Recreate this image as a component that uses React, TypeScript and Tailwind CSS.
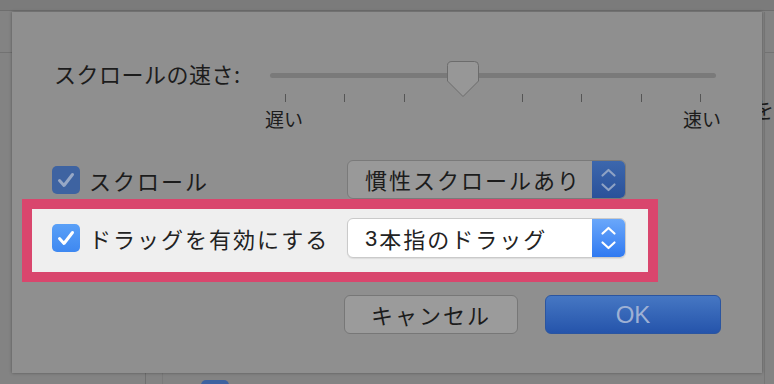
import React from "react";

const font = { fontFamily: '"Noto Sans CJK JP", "Noto Sans", sans-serif' };

function Check({ color }: { color: string }) {
  return (
    <svg width="28" height="28" viewBox="0 0 28 28">
      <path d="M7.5 14.5 L12 19.5 L20.5 8.5" fill="none" stroke={color} strokeWidth="3" strokeLinecap="round" strokeLinejoin="round" />
    </svg>
  );
}

function Chevrons({ color }: { color: string }) {
  return (
    <svg width="33" height="40" viewBox="0 0 33 40">
      <path d="M10.5 15.5 L16.5 10 L22.5 15.5" fill="none" stroke={color} strokeWidth="2.2" strokeLinecap="round" strokeLinejoin="round" />
      <path d="M10.5 24.5 L16.5 30 L22.5 24.5" fill="none" stroke={color} strokeWidth="2.2" strokeLinecap="round" strokeLinejoin="round" />
    </svg>
  );
}

export default function App() {
  const ticks = [0, 1, 2, 3, 4, 5, 6, 7];
  return (
    <div className="relative w-[774px] h-[384px] overflow-hidden bg-[#838383]" style={font}>
      {/* background window decorations */}
      <div className="absolute left-0 top-0 w-[774px] h-[11px] bg-[#7b7b7b] border-b border-[#6e6e6e]" />
      <div className="absolute left-0 top-[52px] w-[12px] h-px bg-[#727272]" />
      <div className="absolute right-0 top-[52px] w-[10px] h-px bg-[#727272]" />
      <div className="absolute left-[764px] top-[12px] w-px h-[372px] bg-[#767676]" />
      <div className="absolute left-[145px] top-[373px] w-px h-[11px] bg-[#6f6f6f]" />
      <div className="absolute left-[162px] top-[373px] w-px h-[11px] bg-[#7a7a7a]" />
      <div className="absolute left-[201px] top-[380px] w-[28px] h-[12px] rounded-[5px] bg-[#3d62a0]" />
      <div className="absolute left-[752px] top-[93px] text-[22px] leading-[30px] text-[#1c1c1c]">を</div>

      {/* dialog */}
      <div className="absolute left-[12px] top-[12px] w-[750px] h-[361px] bg-[#8f8f8f] shadow-[0_0_3px_rgba(0,0,0,0.35)] flex flex-col pt-[46px]">
        {/* slider row */}
        <div className="flex pl-[42px]">
          <div className="w-[216px] h-[30px] text-[22px] leading-[30px] text-[#1c1c1c] tracking-[0.5px] whitespace-nowrap">
            スクロールの速さ:
          </div>
          <div className="w-[446px] mt-[4px] flex flex-col">
            <div className="relative h-[32px]">
              <div className="absolute left-0 top-[11px] w-[446px] h-[5px] rounded-full bg-[#7a7a7a]" />
              <svg className="absolute left-[177px] top-[-1px]" width="33" height="37" viewBox="0 0 33 37">
                <path d="M5 0.5 H27.5 Q31.5 0.5 31.5 4.5 V20 L16 35.5 L0.5 20 V4.5 Q0.5 0.5 5 0.5 Z" fill="#979797" stroke="#6c6c6c" strokeWidth="1" />
              </svg>
            </div>
            <div className="flex justify-between px-[15px] h-[8px]">
              {ticks.map((t) => (
                <div key={t} className={t === 3 ? "w-px h-[8px] bg-transparent" : "w-px h-[8px] bg-[#555555]"} />
              ))}
            </div>
            <div className="flex justify-between -mx-[5px] mt-[5px] text-[19px] leading-[24px] text-[#1c1c1c]">
              <span>遅い</span>
              <span>速い</span>
            </div>
          </div>
        </div>

        {/* scroll row */}
        <div className="flex items-center pl-[40px] mt-[29px] h-[39px]">
          <div className="w-[295px] flex items-center">
            <div className="w-[28px] h-[28px] rounded-[5px] bg-[#3e63a1] flex items-center justify-center">
              <Check color="#97a8c6" />
            </div>
            <span className="ml-[9px] text-[22px] leading-[30px] tracking-[2px] text-[#1c1c1c]">スクロール</span>
          </div>
          <div className="w-[279px] h-[39px] rounded-[6px] border border-[#7a7a7a] bg-[#999999] flex overflow-hidden">
            <div className="flex-1 flex items-center pl-[17px] text-[22px] tracking-[2px] text-[#1c1c1c] whitespace-nowrap">
              慣性スクロールあり
            </div>
            <div className="w-[33px] h-full bg-gradient-to-b from-[#3c67ad] to-[#2a519a] flex items-center justify-center">
              <Chevrons color="#8ea2c4" />
            </div>
          </div>
        </div>

        {/* highlighted row */}
        <div className="ml-[10px] w-[636px] h-[83px] border-[10px] border-[#d9466d] bg-[#efefef] flex items-start pt-[9px] pl-[20px]">
          <div className="w-[295px] h-[40px] flex items-center">
            <div className="w-[28px] h-[28px] rounded-[5px] bg-gradient-to-b from-[#5aa0f7] to-[#3e88f1] flex items-center justify-center">
              <Check color="#ffffff" />
            </div>
            <span className="ml-[9px] text-[22px] leading-[30px] tracking-[2px] text-[#222222] whitespace-nowrap">ドラッグを有効にする</span>
          </div>
          <div className="w-[279px] h-[40px] rounded-[6px] border border-[#cacaca] bg-white flex overflow-hidden shadow-[0_1px_1px_rgba(0,0,0,0.08)]">
            <div className="flex-1 flex items-center pl-[17px] text-[22px] tracking-[2px] text-[#222222] whitespace-nowrap">
              <span style={{ fontFamily: '"Liberation Sans", sans-serif' }}>3</span>本指のドラッグ
            </div>
            <div className="w-[33px] h-full bg-gradient-to-b from-[#6aa7fa] to-[#2f79f1] flex items-center justify-center">
              <Chevrons color="#ffffff" />
            </div>
          </div>
        </div>

        {/* buttons */}
        <div className="flex justify-end gap-[27px] pr-[41px] mt-[13px]">
          <div className="w-[174px] h-[39px] rounded-[6px] border border-[#777777] bg-[#9b9b9b] flex items-center justify-center text-[22px] tracking-[2px] text-[#1c1c1c]">
            キャンセル
          </div>
          <div
            className="w-[176px] h-[39px] rounded-[6px] border border-[#2b55a0] bg-gradient-to-b from-[#4677c3] to-[#2554ab] flex items-center justify-center text-[24px] text-[#9eb1d4]"
            style={{ fontFamily: '"Liberation Sans", sans-serif' }}
          >
            OK
          </div>
        </div>
      </div>
    </div>
  );
}
